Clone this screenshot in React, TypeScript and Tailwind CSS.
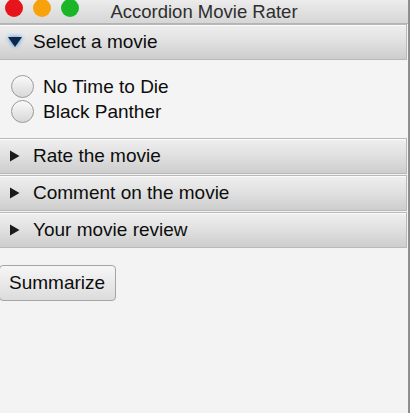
import { useState } from 'react';

const sections = ['Select a movie', 'Rate the movie', 'Comment on the movie', 'Your movie review'];
const movies = ['No Time to Die', 'Black Panther'];

function Arrow({ open }: { open: boolean }) {
    if (open) {
        return (
            <svg width="20" height="16" viewBox="0 0 20 16" className="drop-shadow-[0_0_2px_#1e90ff]">
                <polygon points="3,3 17,3 10,13" fill="#0f2740" />
            </svg>
        );
    }
    return (
        <svg width="14" height="14" viewBox="0 0 14 14">
            <polygon points="3,1.5 12.5,7 3,12.5" fill="#1a1a1a" />
        </svg>
    );
}

function Header({ title, open, onClick }: { title: string; open: boolean; onClick: () => void }) {
    return (
        <button
            type="button"
            onClick={onClick}
            className="flex items-center h-[36px] w-full text-left border border-[#b9b9b9] border-l-0 bg-gradient-to-b from-[#efefef] via-[#e0e0e0] to-[#cdcdcd] shadow-[inset_0_1px_0_#fbfbfb]"
        >
            <span className={open ? 'w-[33px] pl-[5px] flex' : 'w-[33px] pl-[7px] flex'}>
                <Arrow open={open} />
            </span>
            <span className="text-[19px] text-[#0d0d0d]">{title}</span>
        </button>
    );
}

export default function App() {
    const [openIdx, setOpenIdx] = useState(0);
    const [picked, setPicked] = useState<number | null>(null);

    return (
        <div className="w-[413px] h-[413px] overflow-hidden bg-white font-['Liberation_Sans',Arial,sans-serif]">
            <div className="w-[410px] h-[413px] bg-[#f3f3f3] border-r-2 border-[#8e8e8e] flex flex-col">
                {/* title bar */}
                <div className="relative h-[24px] flex items-center bg-gradient-to-b from-[#ececec] to-[#d6d6d6] border-b border-[#b4b4b4]">
                    <div className="flex gap-[10px] pl-[5px] -mt-[7px]">
                        <span className="w-[18px] h-[18px] rounded-full bg-[#e8141c]" />
                        <span className="w-[18px] h-[18px] rounded-full bg-[#f7a10c]" />
                        <span className="w-[18px] h-[18px] rounded-full bg-[#1bb52a]" />
                    </div>
                    <div className="absolute left-0 right-0 -top-[2px] text-center text-[18.5px] text-[#2e2e2e]">
                        Accordion Movie Rater
                    </div>
                </div>

                <div className="pr-[1px]">
                    {sections.map((s, i) => (
                        <div key={s} className="mb-[1px]">
                            <Header title={s} open={openIdx === i} onClick={() => setOpenIdx(openIdx === i ? -1 : i)} />
                            {openIdx === i && i === 0 && (
                                <div className="h-[77px] pl-[11px] pt-[15px] flex flex-col gap-[2px] bg-[#f4f4f4]">
                                    {movies.map((m, j) => (
                                        <label key={m} className="flex items-center gap-[9px] cursor-pointer" onClick={() => setPicked(j)}>
                                            <span className="w-[23px] h-[23px] rounded-full border border-[#9a9a9a] bg-gradient-to-b from-[#fafafa] to-[#d8d8d8] flex items-center justify-center">
                                                {picked === j && <span className="w-[8px] h-[8px] rounded-full bg-[#222]" />}
                                            </span>
                                            <span className="text-[19px] text-[#0d0d0d] leading-[22px]">{m}</span>
                                        </label>
                                    ))}
                                </div>
                            )}
                        </div>
                    ))}
                </div>

                <div className="pt-[16px]">
                    <button
                        type="button"
                        className="h-[36px] w-[117px] -ml-[1px] rounded-[4px] border border-[#a5a5a5] bg-gradient-to-b from-[#f6f6f6] to-[#dcdcdc] text-[19px] text-[#0d0d0d] text-left pl-[9px]"
                    >
                        Summarize
                    </button>
                </div>
            </div>
        </div>
    );
}
